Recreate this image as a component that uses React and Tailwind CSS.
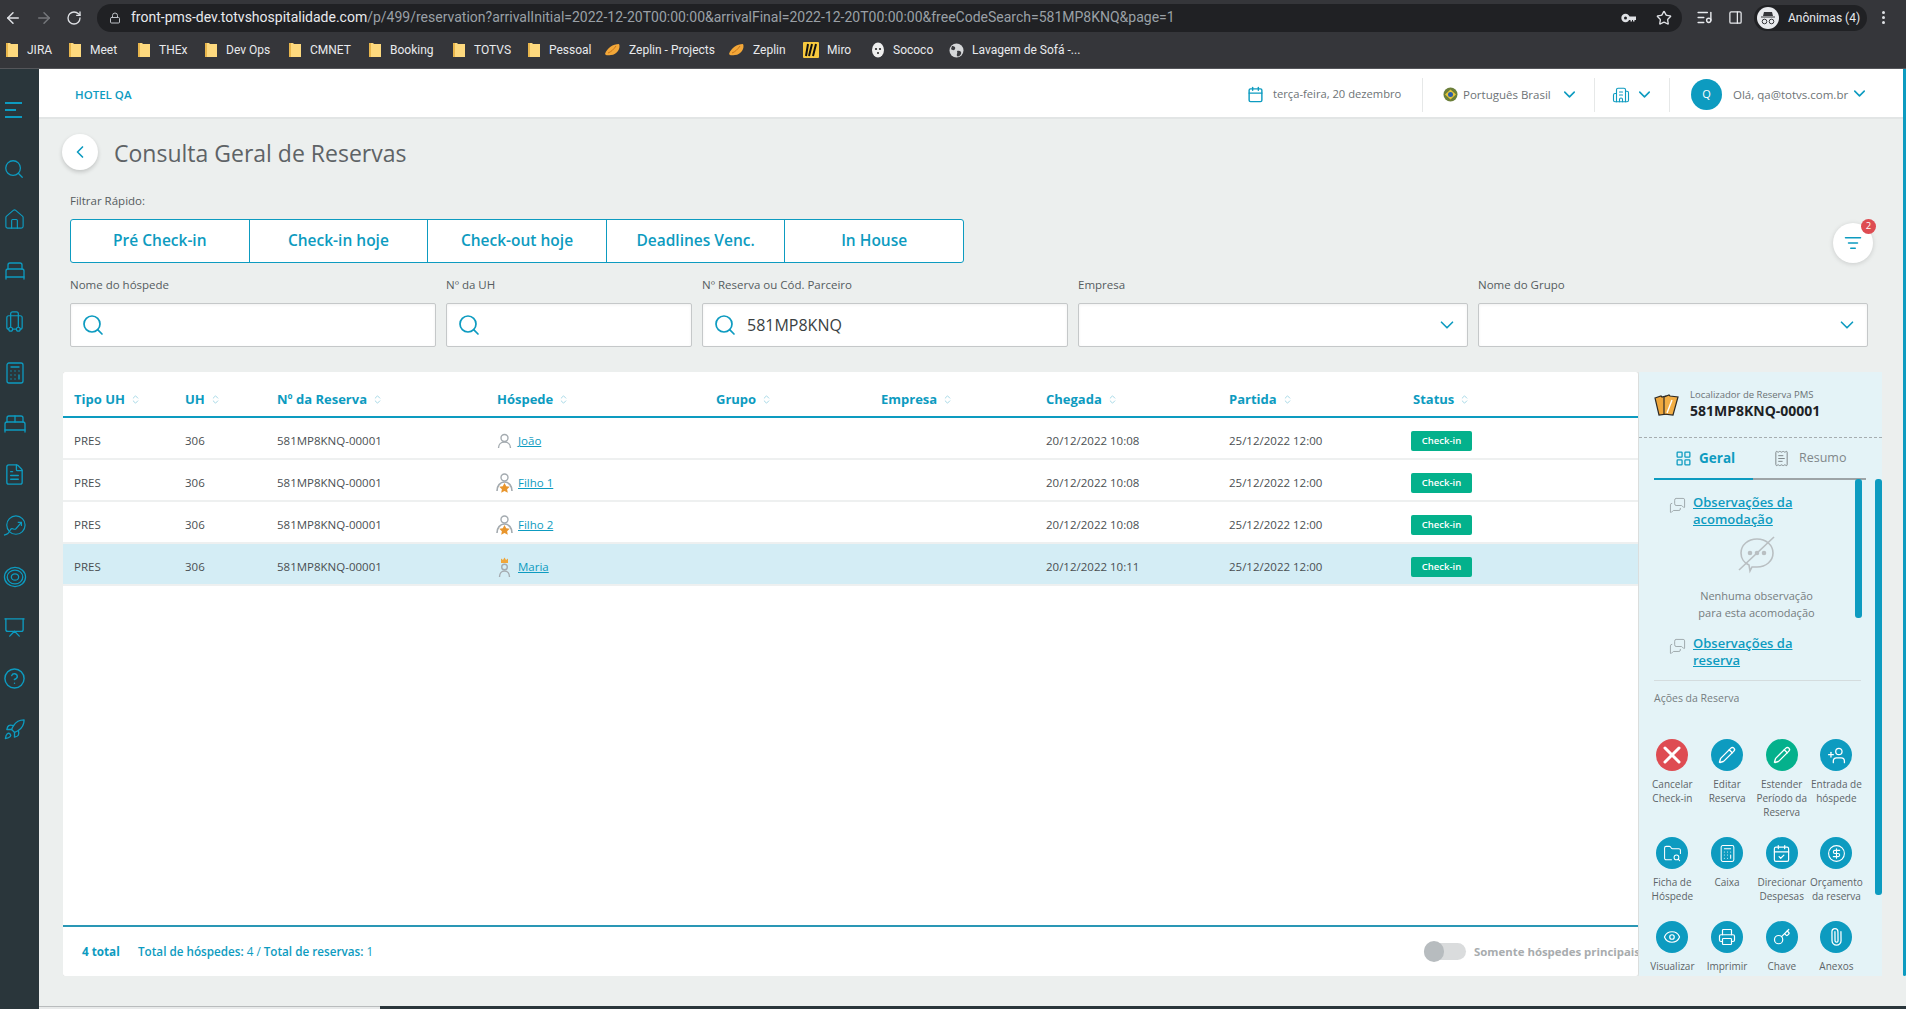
import React from "react";
import {
  ArrowLeft, ArrowRight, RotateCw, Lock, Star, Search, House, BedSingle, Luggage, Calculator, BedDouble, FileText,
  CircleHelp, Rocket, Calendar, ChevronDown, Building2, ChevronLeft, ListFilter, ChevronsUpDown, LayoutGrid, ReceiptText,
  MessagesSquare, X, Pencil, UserPlus, FolderSearch, CalendarCheck, CircleDollarSign, Eye, Printer, Paperclip, Key, Presentation, ListMusic, PanelRight
} from "lucide-react";

const TEAL = "#0d9bc0";

const Folder = () => (
  <svg width="14" height="16" viewBox="0 0 14 16" className="shrink-0">
    <path d="M1 1h4l1 1h7v13H1z" fill="#fdd97e" />
    <path d="M1 1h2v14H1z" fill="#e8b64c" />
  </svg>
);
const Zep = () => (
  <svg width="17" height="14" viewBox="0 0 17 14" className="shrink-0">
    <path d="M1 11C3 5 9 1 15 1c2 4-2 11-8 11-2 0-5 1-6-1z" fill="#f3a738" />
    <path d="M4 10c3-1 6-4 8-7" stroke="#c9761a" strokeWidth="1" fill="none" />
  </svg>
);
const Miro = () => (
  <svg width="16" height="16" viewBox="0 0 16 16" className="shrink-0">
    <rect width="16" height="16" rx="1" fill="#f7c93e" />
    <path d="M5 2 3 14M9 2 6 14M13 2 10 14" stroke="#111" strokeWidth="2" />
  </svg>
);
const Ghost = () => (
  <svg width="14" height="16" viewBox="0 0 14 16" className="shrink-0">
    <ellipse cx="7" cy="8" rx="6" ry="7.5" fill="#eee" />
    <circle cx="5" cy="7" r="1.1" fill="#222" /><circle cx="9" cy="7" r="1.1" fill="#222" /><circle cx="7" cy="11" r="1" fill="#222" />
  </svg>
);
const Globe = () => (
  <svg width="15" height="15" viewBox="0 0 15 15" className="shrink-0">
    <circle cx="7.5" cy="7.5" r="7" fill="#d5d7d9" />
    <path d="M3 3c2 0 4 1 3 3S3 7 2 6M8 8c3-1 5 1 4 3s-3 3-4 2 1-3 0-5z" fill="#3a3b3f" />
  </svg>
);

const bookmarks = [
  { icon: <Folder />, t: "JIRA", w: "w-[63px]" },
  { icon: <Folder />, t: "Meet", w: "w-[69px]" },
  { icon: <Folder />, t: "THEx", w: "w-[67px]" },
  { icon: <Folder />, t: "Dev Ops", w: "w-[84px]" },
  { icon: <Folder />, t: "CMNET", w: "w-[80px]" },
  { icon: <Folder />, t: "Booking", w: "w-[84px]" },
  { icon: <Folder />, t: "TOTVS", w: "w-[75px]" },
  { icon: <Folder />, t: "Pessoal", w: "w-[77px]" },
  { icon: <Zep />, t: "Zeplin - Projects", w: "w-[124px]" },
  { icon: <Zep />, t: "Zeplin", w: "w-[75px]" },
  { icon: <Miro />, t: "Miro", w: "w-[68px]" },
  { icon: <Ghost />, t: "Sococo", w: "w-[78px]" },
  { icon: <Globe />, t: "Lavagem de Sofá -...", w: "w-[140px]" },
];

const MenuLines = () => (
  <svg width="18" height="17" viewBox="0 0 18 17" fill={TEAL}>
    <rect x="0" y="0" width="17" height="2" /><rect x="0" y="7" width="11" height="2" /><rect x="0" y="14" width="17" height="2" />
  </svg>
);
const TrendCircle = () => (
  <svg width="24" height="22" viewBox="0 0 26 24" fill="none" stroke={TEAL} strokeWidth="1.3">
    <circle cx="14" cy="11" r="10" /><path d="M1 22c4-1 5-2 7-6 2-3 4 1 6-1l6-7M16 8h4v4" />
  </svg>
);
const Rings = () => (
  <svg width="24" height="22" viewBox="0 0 26 24" fill="none" stroke={TEAL} strokeWidth="1.4">
    <ellipse cx="13" cy="12" rx="11.500" ry="10.500" /><ellipse cx="13" cy="12" rx="8.500" ry="7.500" /><ellipse cx="13" cy="12" rx="4" ry="3.500" />
  </svg>
);

const side = [
  <Search size={22} strokeWidth={1.4} color={TEAL} />,
  <House size={23} strokeWidth={1.2} color={TEAL} />,
  <BedSingle size={24} strokeWidth={1.3} color={TEAL} />,
  <Luggage size={23} strokeWidth={1.3} color={TEAL} />,
  <Calculator size={24} strokeWidth={1.3} color={TEAL} />,
  <BedDouble size={24} strokeWidth={1.3} color={TEAL} />,
  <FileText size={23} strokeWidth={1.4} color={TEAL} />,
  <TrendCircle />,
  <Rings />,
  <Presentation size={23} strokeWidth={1.4} color={TEAL} />,
  <CircleHelp size={23} strokeWidth={1.5} color={TEAL} />,
  <Rocket size={23} strokeWidth={1.4} color={TEAL} />,
];

const columns = [
  ["Tipo UH", "w-[111px]"], ["UH", "w-[92px]"], ["Nº da Reserva", "w-[220px]"], ["Hóspede", "w-[219px]"], ["Grupo", "w-[165px]"],
  ["Empresa", "w-[165px]"], ["Chegada", "w-[183px]"], ["Partida", "w-[184px]"], ["Status", "w-[160px]"],
];

const Guest = ({ kind }) => (
  <svg width="19" height="22" viewBox="0 0 19 22" fill="none" stroke="#a4abb0" strokeWidth="1.4" className="shrink-0">
    {kind === "plain" && <><circle cx="9.500" cy="8" r="3.500" /><path d="M3.500 18c0-3.500 2.500-6 6-6s6 2.500 6 6" /></>}
    {kind === "star" && <>
      <circle cx="9.500" cy="5.500" r="3.500" />
      <path d="M2 19c0-5 3-9 7.500-9s7.500 4 7.500 9" strokeWidth="1.600" />
      <path d="m9.500 11 1.700 3.300 3.500.5-2.600 2.400.7 3.500-3.300-1.700-3.300 1.700.7-3.500-2.600-2.400 3.500-.5z" fill="#e8952c" stroke="none" />
    </>}
    {kind === "crown" && <>
      <circle cx="9.500" cy="11" r="2.800" />
      <path d="M4.500 21c0-3.500 2-6 5-6s5 2.500 5 6" />
      <path d="M6 7V2.500l2 1.500 1.500-2.500L11 4l2-1.500V7z" fill="#f0a63a" stroke="none" />
    </>}
  </svg>
);

const rows = [
  { n: "João", k: "plain", c: "20/12/2022 10:08" },
  { n: "Filho 1", k: "star", c: "20/12/2022 10:08" },
  { n: "Filho 2", k: "star", c: "20/12/2022 10:08" },
  { n: "Maria", k: "crown", c: "20/12/2022 10:11", on: true },
];

const fields = [
  { l: "Nome do hóspede", s: true },
  { l: "Nº da UH", s: true },
  { l: "Nº Reserva ou Cód. Parceiro", s: true, v: "581MP8KNQ" },
  { l: "Empresa" },
  { l: "Nome do Grupo" },
];

const actions = [
  { t: ["Cancelar", "Check-in"], i: <X size={28} strokeWidth={2.6} />, bg: "bg-[#de4c52]" },
  { t: ["Editar", "Reserva"], i: <Pencil size={18} strokeWidth={1.8} />, bg: "bg-[#0d9bc0]" },
  { t: ["Estender", "Período da", "Reserva"], i: <Pencil size={18} strokeWidth={1.8} />, bg: "bg-[#04b18c]" },
  { t: ["Entrada de", "hóspede"], i: <UserPlus size={19} strokeWidth={1.6} className="-scale-x-100" />, bg: "bg-[#0d9bc0]" },
  { t: ["Ficha de", "Hóspede"], i: <FolderSearch size={19} strokeWidth={1.3} />, bg: "bg-[#0d9bc0]" },
  { t: ["Caixa"], i: <Calculator size={19} strokeWidth={1.3} />, bg: "bg-[#0d9bc0]" },
  { t: ["Direcionar", "Despesas"], i: <CalendarCheck size={19} strokeWidth={1.5} />, bg: "bg-[#0d9bc0]" },
  { t: ["Orçamento", "da reserva"], i: <CircleDollarSign size={19} strokeWidth={1.4} />, bg: "bg-[#0d9bc0]" },
  { t: ["Visualizar"], i: <Eye size={18} strokeWidth={1.6} />, bg: "bg-[#0d9bc0]" },
  { t: ["Imprimir", "Slip"], i: <Printer size={18} strokeWidth={1.6} />, bg: "bg-[#0d9bc0]" },
  { t: ["Chave", "Eletrônica"], i: <Key size={18} strokeWidth={1.6} />, bg: "bg-[#0d9bc0]" },
  { t: ["Anexos"], i: <Paperclip size={18} strokeWidth={1.7} className="-rotate-45" />, bg: "bg-[#0d9bc0]" },
];

const Tickets = () => (
  <svg width="26" height="24" viewBox="0 0 26 24" className="shrink-0">
    <path d="M1 5l6-2 1 1 4-1 1 18-8 1z" fill="#eea63c" stroke="#2d2a26" strokeWidth="1.2" />
    <path d="M10 4l5-2 1 1 8 1-5 18-9-1z" fill="#f2ae45" stroke="#2d2a26" strokeWidth="1.2" />
    <path d="M13 20l5-13" stroke="#fff" strokeWidth="1.400" />
  </svg>
);

const ObsLink = ({ a, b }) => (
  <div className="flex pl-[30px]">
    <MessagesSquare size={17} strokeWidth={1.3} className="mt-[3px] mr-[7px] text-[#9aa3a7] shrink-0 -scale-x-100" />
    <a className="text-[13px] leading-[17px] font-semibold text-[#0d9bc0] underline">{a}<br />{b}</a>
  </div>
);

export default function App() {
  return (
    <div className="w-[1906px] h-[1009px] overflow-hidden bg-[#ecefee] font-['Open_Sans',sans-serif]">
      {/* Browser chrome */}
      <div className="h-[69px] bg-[#35363a] border-b border-[#55565a] font-['Roboto',sans-serif]">
        <div className="h-[35px] flex items-center">
          <div className="w-[97px] flex items-center pl-[4px] gap-[13px] text-[#dfe1e5] shrink-0">
            <ArrowLeft size={18} />
            <ArrowRight size={18} className="text-[#75777b]" />
            <RotateCw size={16} />
          </div>
          <div className="w-[1585px] h-[28px] rounded-full bg-[#202124] flex items-center pl-[12px] pr-[10px] shrink-0">
            <Lock size={12} className="text-[#bdc1c6] mr-[10px]" />
            <span className="text-[14px] text-[#e8eaed] whitespace-nowrap">front-pms-dev.totvshospitalidade.com<span className="text-[#9aa0a6]">/p/499/reservation?arrivalInitial=2022-12-20T00:00:00&amp;arrivalFinal=2022-12-20T00:00:00&amp;freeCodeSearch=581MP8KNQ&amp;page=1</span></span>
            <div className="ml-auto flex items-center gap-[20px] text-[#dfe1e5]">
              <svg width="15" height="10" viewBox="0 0 15 10" fill="#dfe1e5"><circle cx="4.500" cy="5" r="4.200" /><circle cx="4.500" cy="5" r="1.500" fill="#202124" /><path d="M8 3.500h7V7h-1.500v1.500H12V7h-1v1.500H9.500V7H8z" /></svg>
              <Star size={16} />
            </div>
          </div>
          <div className="flex items-center pl-[14px] gap-[15px] text-[#e8eaed]">
            <ListMusic size={17} />
            <PanelRight size={15} />
          </div>
          <div className="ml-[11px] w-[113px] h-[26px] rounded-full bg-[#202124] flex items-center pl-[3px] gap-[9px]">
            <div className="w-[22px] h-[22px] rounded-full bg-[#e8eaed] flex items-center justify-center">
              <svg width="16" height="14" viewBox="0 0 16 14" fill="#35363a"><path d="M4 1h8l1 4H3zM1 5.500h14v1H1z" /><circle cx="4.500" cy="10.500" r="2.300" fill="none" stroke="#35363a" /><circle cx="11.500" cy="10.500" r="2.300" fill="none" stroke="#35363a" /></svg>
            </div>
            <span className="text-[12px] text-[#e8eaed] whitespace-nowrap">Anônimas (4)</span>
          </div>
          <div className="ml-[15px] flex flex-col gap-[2px]">
            <i className="block w-[3px] h-[3px] rounded-full bg-[#dfe1e5]" /><i className="block w-[3px] h-[3px] rounded-full bg-[#dfe1e5]" /><i className="block w-[3px] h-[3px] rounded-full bg-[#dfe1e5]" />
          </div>
        </div>
        <div className="h-[30px] flex items-center pl-[5px]">
          {bookmarks.map((b) => (
            <div key={b.t} className={`${b.w} flex items-center gap-[8px] shrink-0`}>
              {b.icon}
              <span className="text-[12px] text-[#e8eaed] whitespace-nowrap">{b.t}</span>
            </div>
          ))}
        </div>
      </div>

      <div className="flex h-[940px]">
        {/* Sidebar */}
        <aside className="w-[39px] shrink-0 bg-[#2a363b] flex flex-col items-start pt-[33px]">
          <div className="pl-[5px]"><MenuLines /></div>
          <div className="mt-[24px] flex flex-col items-start pl-[3px]">
            {side.map((s, i) => (
              <div key={i} className="h-[51px] flex items-center">{s}</div>
            ))}
          </div>
        </aside>

        <div className="flex-1 min-w-0 flex flex-col">
          <div className="flex h-[937px]">
            <main className="w-[1864px] shrink-0 h-full flex flex-col">
              {/* Top bar */}
              <header className="h-[50px] bg-white border-b-2 border-[#e2e5e5] flex items-center pt-[3px] shrink-0">
                <span className="ml-[36px] text-[11.5px] font-semibold text-[#0d9bc0]">HOTEL QA</span>
                <div className="ml-auto flex items-center h-[34px] text-[11.5px] text-[#6d7376]">
                  <Calendar size={17} className="text-[#0d9bc0] mr-[9px]" />
                  <span className="w-[149px] whitespace-nowrap text-[11.2px]">terça-feira, 20 dezembro</span>
                  <div className="w-px h-full bg-[#e6e8e8]" />
                  <svg width="15" height="15" viewBox="0 0 15 15" className="ml-[20px] mr-[5px]">
                    <circle cx="7.500" cy="7.500" r="7" fill="#6b7f3a" /><path d="M7.500 2.500 13 7.500l-5.500 5L2 7.500z" fill="#e6c53a" /><circle cx="7.500" cy="7.500" r="2.500" fill="#2c5fa8" />
                  </svg>
                  <span className="w-[97px] whitespace-nowrap">Português Brasil</span>
                  <ChevronDown size={19} strokeWidth={2} className="text-[#0d9bc0]" />
                  <div className="w-px h-full bg-[#e6e8e8] ml-[15px]" />
                  <Building2 size={18} strokeWidth={1.5} className="text-[#0d9bc0] ml-[17px] mr-[5px]" />
                  <ChevronDown size={19} strokeWidth={2} className="text-[#0d9bc0]" />
                  <div className="w-px h-full bg-[#e6e8e8] ml-[15px]" />
                  <div className="ml-[21px] mr-[11px] w-[31px] h-[31px] rounded-full bg-[#0d9bc0] text-white flex items-center justify-center text-[11px]">Q</div>
                  <span className="whitespace-nowrap w-[117px]">Olá, qa@totvs.com.br</span>
                  <ChevronDown size={19} strokeWidth={2} className="text-[#0d9bc0] -mt-[3px]" />
                  <div className="w-[34px]" />
                </div>
              </header>

              {/* Title */}
              <div className="mt-[15px] ml-[23px] flex items-center h-[36px] shrink-0">
                <button className="w-[36px] h-[36px] rounded-full bg-white shadow-[0_2px_4px_rgba(0,0,0,0.18)] flex items-center justify-center">
                  <ChevronLeft size={20} className="text-[#0d9bc0]" />
                </button>
                <h1 className="ml-[16px] mt-[2px] text-[23px] font-normal text-[#5e6366] leading-none whitespace-nowrap">Consulta Geral de Reservas</h1>
              </div>

              <div className="mt-[23px] ml-[31px] text-[11.5px] leading-[16px] text-[#555c60] shrink-0">Filtrar Rápido:</div>

              <div className="mt-[10px] ml-[31px] mr-[30px] flex items-end justify-between h-[44px] shrink-0">
                <div className="flex h-[44px] border border-[#0d9bc0] rounded-[3px] bg-white w-[894px]">
                  {["Pré Check-in", "Check-in hoje", "Check-out hoje", "Deadlines Venc.", "In House"].map((t, i) => (
                    <div key={t} className={i === 0 ? "flex-1 flex items-center justify-center text-[15.5px] font-semibold text-[#0d9bc0]" : "flex-1 flex items-center justify-center text-[15.5px] font-semibold text-[#0d9bc0] border-l border-[#0d9bc0]"}>{t}</div>
                  ))}
                </div>
                <button className="relative w-[40px] h-[40px] rounded-full bg-white shadow-[0_1px_5px_rgba(0,0,0,0.15)] flex items-center justify-center">
                  <ListFilter size={18} className="text-[#0d9bc0]" />
                  <span className="absolute -top-[4px] right-[-3px] w-[15px] h-[15px] rounded-full bg-[#de4c52] text-white text-[9.5px] flex items-center justify-center">2</span>
                </button>
              </div>

              {/* Fields */}
              <div className="mt-[14px] ml-[31px] grid grid-cols-[366px_246px_366px_390px_390px] gap-x-[10px] shrink-0">
                {fields.map((f) => (
                  <div key={f.l}>
                    <div className="text-[11.5px] leading-[16px] text-[#555c60] mb-[10px] whitespace-nowrap">{f.l}</div>
                    <div className="h-[44px] bg-white border border-[#c5c8c9] rounded-[2px] shadow-[inset_0_1px_3px_rgba(0,0,0,0.06)] flex items-center px-[10px]">
                      {f.s && <Search size={24} strokeWidth={1.7} className="text-[#0d9bc0] shrink-0" />}
                      {f.v && <span className="ml-[10px] text-[16px] text-[#3a3f42]">{f.v}</span>}
                      {!f.s && <ChevronDown size={22} strokeWidth={1.8} className="text-[#0d9bc0] ml-auto -mr-[1px]" />}
                    </div>
                  </div>
                ))}
              </div>

              {/* Card */}
              <div className="mt-[25px] ml-[24px] w-[1819px] h-[604px] flex gap-px overflow-hidden shrink-0">
                <section className="w-[1575px] shrink-0 bg-white flex flex-col shadow-[0_0_3px_rgba(0,0,0,0.2)] rounded-[2px]">
                  <div className="h-[46px] flex items-center border-b-2 border-[#0d9bc0] pl-[11px] pt-[11px] shrink-0">
                    {columns.map(([t, w]) => (
                      <div key={t} className={`${w} flex items-center gap-[5px] text-[13px] font-bold text-[#0d9bc0] whitespace-nowrap shrink-0`}>
                        {t}<ChevronsUpDown size={11} strokeWidth={2} className="text-[#9ed4e4]" />
                      </div>
                    ))}
                  </div>
                  {rows.map((r) => (
                    <div key={r.n} className={r.on ? "h-[42px] flex items-center pl-[11px] pt-[6px] text-[11.5px] text-[#4a4f52] bg-[#d4edf5] border-b-2 border-[#eef0f0] shrink-0" : "h-[42px] flex items-center pl-[11px] pt-[6px] text-[11.5px] text-[#4a4f52] border-b-2 border-[#eef0f0] shrink-0"}>
                      <div className="w-[111px] shrink-0">PRES</div>
                      <div className="w-[92px] shrink-0">306</div>
                      <div className="w-[220px] shrink-0">581MP8KNQ-00001</div>
                      <div className="w-[219px] shrink-0 flex items-center gap-[4px] -ml-[2px]">
                        <Guest kind={r.k} /><a className="text-[#0d9bc0] underline">{r.n}</a>
                      </div>
                      <div className="w-[165px] shrink-0" />
                      <div className="w-[167px] shrink-0" />
                      <div className="w-[183px] shrink-0">{r.c}</div>
                      <div className="w-[182px] shrink-0">25/12/2022 12:00</div>
                      <div className="w-[61px] h-[20px] rounded-[2px] bg-[#04b18c] text-white text-[9.5px] font-semibold flex items-center justify-center">Check-in</div>
                    </div>
                  ))}
                  <div className="flex-1" />
                  <div className="h-[51px] border-t-2 border-[#2a97b5] flex items-center pl-[19px] text-[11.7px] text-[#0d9bc0] shrink-0 overflow-hidden">
                    <span className="font-bold w-[56px]">4 total</span>
                    <span className="whitespace-nowrap"><b className="font-semibold">Total de hóspedes:</b> 4 / <b className="font-semibold">Total de reservas:</b> 1</span>
                    <div className="ml-auto flex items-center shrink-0 -mr-[2px]">
                      <div className="relative w-[42px] h-[17px] rounded-full bg-[#dadcdd] mr-[8px]">
                        <div className="absolute left-0 top-[-2px] w-[20px] h-[21px] rounded-full bg-[#b7bcbf]" />
                      </div>
                      <span className="text-[11.4px] font-bold text-[#a8acae] whitespace-nowrap">Somente hóspedes principais</span>
                    </div>
                  </div>
                </section>

                {/* Panel */}
                <section className="relative w-[243px] shrink-0 bg-[#e4f3f7] overflow-hidden">
                  <div className="h-[66px] border-b border-dashed border-[#a6adb0] flex items-center pl-[15px]">
                    <Tickets />
                    <div className="ml-[10px]">
                      <div className="text-[9.5px] leading-[13px] text-[#6b7275] whitespace-nowrap">Localizador de Reserva PMS</div>
                      <div className="text-[14px] leading-[20px] font-bold text-[#1d2225] whitespace-nowrap">581MP8KNQ-00001</div>
                    </div>
                  </div>
                  <div className="ml-[15px] w-[212px] h-[42px] flex">
                    <div className="w-[99px] border-b-2 border-[#0d9bc0] flex items-center pl-[21px] gap-[7px] text-[13.5px] font-bold text-[#0d9bc0]">
                      <LayoutGrid size={17} strokeWidth={1.8} />Geral
                    </div>
                    <div className="flex-1 border-b-2 border-[#9da4a7] flex items-center pl-[20px] gap-[9px] text-[12.5px] text-[#80878a]">
                      <ReceiptText size={17} strokeWidth={1.4} />Resumo
                    </div>
                  </div>
                  <div className="mt-[14px]"><ObsLink a="Observações da" b="acomodação" /></div>
                  <div className="mt-[7px] flex justify-center pr-[8px]">
                    <svg width="42" height="40" viewBox="0 0 42 40" fill="none" stroke="#b9bfc2" strokeWidth="1.6">
                      <path d="M21 4c9 0 16 6 16 14s-7 14-16 14h-5l-2 4-1-6C8 28 5 23 5 18 5 10 12 4 21 4z" />
                      <path d="M3 35 38 2" />
                      <circle cx="14" cy="18" r="1.500" fill="#b9bfc2" /><circle cx="21" cy="18" r="1.500" fill="#b9bfc2" /><circle cx="28" cy="18" r="1.500" fill="#b9bfc2" />
                    </svg>
                  </div>
                  <div className="mt-[12px] text-center pr-[8px] text-[11px] leading-[17px] text-[#767d80]">Nenhuma observação<br />para esta acomodação</div>
                  <div className="mt-[14px]"><ObsLink a="Observações da" b="reserva" /></div>
                  <div className="mt-[11px] ml-[15px] w-[207px] h-px bg-[#d4dcde]" />
                  <div className="mt-[10px] ml-[15px] text-[10.5px] leading-[14px] text-[#767d80]">Ações da Reserva</div>
                  <div className="mt-[34px] ml-[6px] grid grid-cols-[repeat(4,54.7px)] gap-y-[18px]">
                    {actions.map((a) => (
                      <div key={a.t.join()} className="flex flex-col items-center">
                        <div className={`w-[32px] h-[32px] rounded-full ${a.bg} text-white flex items-center justify-center`}>{a.i}</div>
                        <div className="mt-[6px] text-[10px] leading-[14px] text-[#5d6467] text-center whitespace-nowrap">
                          {a.t.map((l) => <div key={l}>{l}</div>)}
                        </div>
                      </div>
                    ))}
                  </div>
                  <div className="absolute left-[216px] top-[107px] w-[7px] h-[139px] rounded-[3px] bg-[#0d9bc0]" />
                  <div className="absolute left-[236px] top-[107px] w-[7px] h-[416px] rounded-[3px] bg-[#0d9bc0]" />
                </section>
              </div>
            </main>
            <div className="w-[3px] h-[907px] bg-[#0d9bc0] rounded-b-[2px]" />
          </div>
          <div className="h-[3px] flex shrink-0">
            <div className="w-[341px] bg-[#e8eaea] border-t border-[#b9bcbd]" />
            <div className="flex-1 bg-[#2a363b]" />
          </div>
        </div>
      </div>
    </div>
  );
}
